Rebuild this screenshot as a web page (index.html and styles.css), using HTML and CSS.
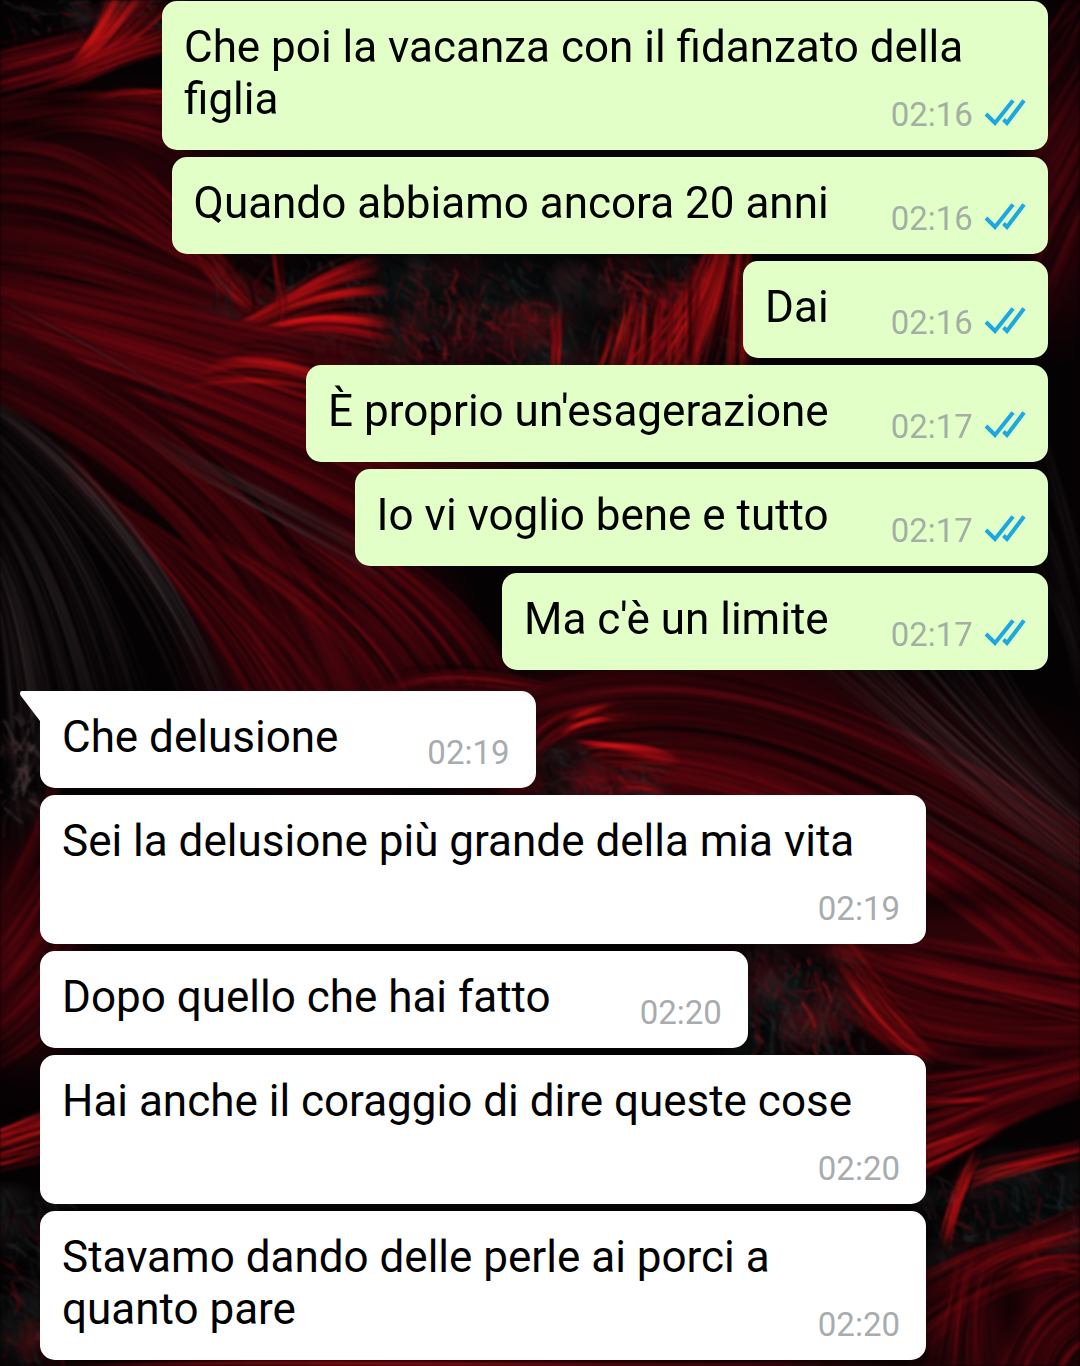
FILE: index.html
```html
<!DOCTYPE html>
<html lang="it">

<head>
    <meta charset="UTF-8">
    <meta name="viewport" content="width=device-width, initial-scale=1">
    <title>Chat</title>
    <link rel="stylesheet" href="styles.css">
</head>

<body>
    <svg class="icon-defs" aria-hidden="true">
        <symbol id="ticks" viewBox="0 0 42 28">
            <path d="M2 16 L11 25 L29 2.500 M19.500 21.500 L23 25 L40 2.500" />
        </symbol>
    </svg>

    <div class="chat-container">
        <canvas class="wallpaper" id="wallpaper" width="1080" height="1366"></canvas>

        <div class="chat-body">
            <!-- Sent messages -->
            <div class="message sent">
                <span class="content">Che poi la vacanza con il fidanzato della figlia</span>
                <span class="timestamp">02:16 <svg class="ticks"><use href="#ticks" /></svg></span>
            </div>
            <div class="message sent">
                <span class="content">Quando abbiamo ancora 20 anni</span>
                <span class="timestamp">02:16 <svg class="ticks"><use href="#ticks" /></svg></span>
            </div>
            <div class="message sent">
                <span class="content">Dai</span>
                <span class="timestamp">02:16 <svg class="ticks"><use href="#ticks" /></svg></span>
            </div>
            <div class="message sent">
                <span class="content">È proprio un'esagerazione</span>
                <span class="timestamp">02:17 <svg class="ticks"><use href="#ticks" /></svg></span>
            </div>
            <div class="message sent">
                <span class="content">Io vi voglio bene e tutto</span>
                <span class="timestamp">02:17 <svg class="ticks"><use href="#ticks" /></svg></span>
            </div>
            <div class="message sent">
                <span class="content">Ma c'è un limite</span>
                <span class="timestamp">02:17 <svg class="ticks"><use href="#ticks" /></svg></span>
            </div>

            <!-- Received messages -->
            <div class="message received first">
                <span class="content">Che delusione</span>
                <span class="timestamp">02:19</span>
            </div>
            <div class="message received">
                <span class="content">Sei la delusione più grande della mia vita</span>
                <span class="timestamp">02:19</span>
            </div>
            <div class="message received">
                <span class="content">Dopo quello che hai fatto</span>
                <span class="timestamp">02:20</span>
            </div>
            <div class="message received">
                <span class="content">Hai anche il coraggio di dire queste cose</span>
                <span class="timestamp">02:20</span>
            </div>
            <div class="message received">
                <span class="content">Stavamo dando delle perle ai porci a quanto pare</span>
                <span class="timestamp">02:20</span>
            </div>
        </div>
    </div>

    <script src="wallpaper.js"></script>
</body>

</html>
```

FILE: styles.css
```css
body {
    font-family: Roboto, "Liberation Sans", sans-serif;
    margin: 0;
    padding: 0;
    background-color: #080203;
}

.icon-defs {
    display: none;
}

.chat-container {
    position: relative;
    min-height: 100vh;
    overflow: hidden;
}

/* sits behind the messages */
.wallpaper {
    position: absolute;
    top: 0;
    left: 0;
    width: 100%;
    height: 100%;
    object-fit: cover;
    filter: blur(1px);
}

.chat-body {
    position: relative;
    display: flex;
    flex-direction: column;
    gap: 7px;
    padding: 1px 32px 6px 40px;
}

.message {
    display: flow-root;
    box-sizing: border-box;
    max-width: 886px;
    padding: 20px 22px 13px 22px;
    border-radius: 15px;
    font-size: 44px;
    line-height: 52px;
    color: #000;
}

.message.sent {
    align-self: flex-end;
    background-color: #e1ffc7;
}

.message.received {
    position: relative;
    align-self: flex-start;
    padding-right: 26px;
    background-color: #fff;
}

.message.first {
    margin-top: 14px;
    border-top-left-radius: 0;
}

/* bubble tail */
.message.first::before {
    content: "";
    position: absolute;
    top: 0;
    right: 100%;
    width: 20px;
    height: 30px;
    background-color: #fff;
    clip-path: path("M20 0 H2 Q0 0 0 2 Q0 4 1 5 L20 30 Z");
}

/* drops to its own row when the last line of text is too long */
.timestamp {
    float: right;
    margin-top: 20px;
    margin-left: 62px;
    font-size: 33px;
    line-height: 44px;
    white-space: nowrap;
    color: #a5aea5;
}

.received .timestamp {
    margin-left: 89px;
    color: #a8acae;
}

.ticks {
    width: 42px;
    height: 28px;
    margin-left: 3px;
    fill: none;
    stroke: #1ba8e2;
    stroke-width: 4;
}
```

FILE: wallpaper.js
```js
// Dark red feather wallpaper, drawn strand by strand
var canvas = document.getElementById("wallpaper");
var ctx = canvas.getContext("2d");

var seed = 11;
function rnd() {
    seed = (seed * 16807) % 2147483647;
    return seed / 2147483647;
}

function glow(x, y, rx, ry, color, alpha) {
    ctx.save();
    ctx.translate(x, y);
    ctx.scale(rx, ry);
    var g = ctx.createRadialGradient(0, 0, 0, 0, 0, 1);
    g.addColorStop(0, "rgba(" + color + "," + (alpha || 1) + ")");
    g.addColorStop(1, "rgba(" + color + ",0)");
    ctx.fillStyle = g;
    ctx.fillRect(-1, -1, 2, 2);
    ctx.restore();
}

// a and b are the two outer bezier curves, the strands run between them
function feather(a, b, count, colors, alpha, width) {
    for (var i = 0; i < count; i++) {
        var t = rnd() * 1.1 - 0.05;
        var p = [];
        for (var k = 0; k < 8; k++) {
            p.push(a[k] + (b[k] - a[k]) * t + (rnd() - 0.5) * 12);
        }
        var c = colors[Math.floor(rnd() * colors.length)];
        var g = ctx.createLinearGradient(p[0], p[1], p[6], p[7]);
        var peak = 0.2 + rnd() * 0.6;
        var o = alpha * (0.2 + rnd() * 0.6);
        g.addColorStop(0, "rgba(" + c + ",0)");
        g.addColorStop(peak, "rgba(" + c + "," + o + ")");
        g.addColorStop(1, "rgba(" + c + ",0)");
        ctx.strokeStyle = g;
        ctx.lineWidth = width * (0.4 + rnd());
        ctx.beginPath();
        ctx.moveTo(p[0], p[1]);
        ctx.bezierCurveTo(p[2], p[3], p[4], p[5], p[6], p[7]);
        ctx.stroke();
    }
}

// short barbs scattered over a dark area, lit in loose patches
function fluff(x, y, w, h, count, colors, angle) {
    for (var n = 0; n < count / 25; n++) {
        var c = colors[Math.floor(rnd() * colors.length)];
        glow(x + rnd() * w, y + rnd() * h, 12 + rnd() * 30, 10 + rnd() * 26, c, 0.35);
    }
    for (var i = 0; i < count; i++) {
        var px = x + rnd() * w;
        var py = y + rnd() * h;
        var d = angle + (rnd() - 0.5) * 1.8;
        var bend = d + (rnd() - 0.5) * 0.7;
        var len = 4 + rnd() * 16;
        var s = colors[Math.floor(rnd() * colors.length)];
        ctx.lineWidth = 1 + rnd() * 3;
        ctx.strokeStyle = "rgba(" + s + "," + (0.1 + rnd() * 0.4) + ")";
        ctx.beginPath();
        ctx.moveTo(px, py);
        ctx.quadraticCurveTo(px + Math.cos(d) * len, py + Math.sin(d) * len,
            px + Math.cos(bend) * len * 1.6, py + Math.sin(bend) * len * 1.6);
        ctx.stroke();
    }
}

var deep = ["60,3,9", "80,4,12", "45,2,8", "0,0,0", "0,0,0", "95,8,15"];
var red = ["115,5,15", "90,4,13", "140,9,18", "60,2,9", "5,0,2", "0,0,0"];
var hot = ["200,14,20", "230,24,22", "150,8,18", "110,4,14", "15,0,2", "0,0,0"];
var gray = ["95,80,82", "65,58,60", "100,78,80", "50,22,28", "0,0,0", "0,0,0"];
var teal = ["18,28,28", "34,42,42", "50,50,54", "80,12,20", "4,12,12", "0,0,0"];
var ember = ["130,12,22", "95,10,20", "60,8,16", "24,30,30", "165,22,26"];

ctx.fillStyle = "#050203";
ctx.fillRect(0, 0, 1080, 1366);

// base tones
glow(110, 200, 230, 130, "48,2,8");
glow(330, 430, 260, 140, "80,3,12");
glow(200, 400, 200, 110, "45,2,8");
glow(330, 650, 160, 160, "70,4,13");
glow(700, 750, 280, 150, "78,3,11");
glow(900, 840, 280, 170, "50,3,8");
glow(1010, 990, 190, 120, "68,4,10");
glow(1060, 180, 60, 190, "55,3,10");
glow(15, 960, 90, 150, "65,4,10");
glow(1020, 1320, 130, 110, "60,4,10");

// top left
fluff(0, 0, 170, 40, 110, teal, 0.4);
feather([-30, 50, 40, 40, 70, 30, 100, 26], [-30, 110, 60, 90, 110, 70, 165, 30], 130, red, 0.8, 3);
feather([70, 60, 95, 40, 100, 10, 110, -20], [80, 80, 120, 50, 150, 20, 200, -10], 50, hot, 0.8, 4);
feather([40, 80, 90, 60, 130, 40, 190, 20], [60, 90, 100, 70, 140, 50, 190, 45], 40, hot, 0.7, 3);
feather([-30, 110, 60, 90, 120, 92, 190, 92], [-40, 160, 60, 110, 130, 130, 200, 170], 130, red, 0.7, 4);
feather([90, 96, 120, 88, 150, 90, 185, 88], [90, 104, 120, 98, 150, 100, 185, 102], 26, hot, 0.9, 3);
feather([-40, 150, 80, 130, 130, 190, 250, 290], [-40, 260, 110, 260, 190, 330, 400, 350], 380, deep, 0.8, 5);
feather([120, 150, 160, 180, 200, 220, 250, 300], [60, 200, 140, 240, 200, 280, 280, 320], 80, red, 0.6, 3);
feather([190, 250, 205, 270, 220, 290, 250, 315], [210, 250, 225, 275, 235, 290, 260, 315], 18, hot, 0.6, 3);
glow(60, 100, 110, 18, "0,0,0", 0.7);
glow(20, 125, 90, 22, "0,0,0", 0.7);

// middle band
glow(500, 310, 250, 80, "8,14,14");
fluff(210, 255, 530, 115, 900, teal, 1.2);
fluff(400, 265, 90, 90, 120, ember, 1);
fluff(480, 300, 60, 40, 60, ember, 1);
fluff(600, 255, 110, 50, 120, ember, 1);
feather([220, 330, 280, 310, 310, 270, 380, 258], [220, 350, 280, 330, 310, 320, 400, 345], 110, hot, 0.8, 5);
feather([272, 330, 282, 300, 275, 280, 272, 240], [282, 330, 290, 300, 285, 280, 280, 245], 18, hot, 0.6, 3);
feather([600, 395, 640, 350, 690, 310, 715, 230], [760, 400, 750, 340, 745, 300, 750, 220], 130, hot, 0.7, 3);
feather([590, 390, 605, 350, 610, 335, 618, 310], [700, 390, 700, 340, 700, 310, 700, 260], 60, hot, 0.8, 4);
feather([550, 380, 548, 350, 552, 335, 554, 310], [562, 380, 560, 350, 562, 335, 560, 310], 18, hot, 0.9, 4);

// left sweep
feather([-60, 260, 120, 300, 230, 330, 420, 360], [-60, 350, 130, 390, 250, 450, 440, 560], 360, red, 0.55, 5);
feather([220, 350, 260, 335, 300, 355, 350, 370], [180, 385, 250, 375, 290, 380, 340, 395], 36, hot, 0.6, 5);
feather([-60, 300, 130, 380, 300, 480, 410, 740], [-60, 380, 130, 440, 250, 570, 300, 750], 280, deep, 0.7, 5);
feather([60, 480, 200, 540, 300, 620, 380, 760], [60, 440, 130, 540, 240, 640, 270, 760], 150, red, 0.55, 2);
feather([340, 520, 440, 580, 490, 630, 530, 720], [200, 530, 300, 590, 370, 650, 400, 730], 150, red, 0.6, 3);
feather([-40, 270, 70, 330, 180, 380, 230, 440], [-30, 290, 70, 345, 170, 390, 220, 450], 7, gray, 0.5, 2);
feather([120, 430, 220, 490, 310, 530, 400, 590], [140, 420, 220, 470, 310, 510, 400, 560], 26, gray, 0.45, 2);
feather([-60, 370, 70, 430, 180, 560, 240, 730], [-60, 390, 60, 480, 150, 590, 190, 730], 60, gray, 0.45, 2);
feather([-40, 400, 60, 500, 110, 590, 150, 740], [-20, 560, 8, 600, 15, 700, 20, 850], 180, gray, 0.32, 2);
feather([370, 690, 430, 655, 500, 670, 580, 690], [370, 710, 430, 680, 500, 690, 580, 710], 60, red, 0.6, 3);

// left edge
fluff(0, 700, 50, 120, 90, gray, 1.5);
feather([0, 900, 20, 860, 40, 830, 60, 760], [-20, 1080, 20, 1060, 40, 1040, 80, 1000], 120, red, 0.5, 4);
glow(10, 1090, 60, 40, "5,0,4", 0.8);
feather([-30, 1145, 15, 1130, 35, 1120, 80, 1105], [-30, 1175, 15, 1168, 35, 1160, 80, 1145], 60, hot, 0.9, 4);
fluff(0, 1185, 60, 181, 170, teal, 0.8);
fluff(0, 1250, 60, 116, 40, ember, 0.8);

// right edge
feather([1030, 60, 1060, 30, 1070, 10, 1090, -20], [1030, 350, 1060, 290, 1080, 240, 1100, 200], 110, deep, 0.7, 3);
feather([1030, 380, 1055, 440, 1070, 520, 1100, 620], [1030, 560, 1050, 600, 1070, 650, 1090, 720], 50, gray, 0.25, 2);

// big plume on the right
feather([480, 780, 600, 640, 760, 660, 1150, 920], [500, 800, 640, 740, 860, 770, 1150, 1080], 450, red, 0.5, 5);
feather([480, 710, 640, 640, 820, 660, 1150, 880], [540, 780, 660, 700, 840, 740, 1150, 980], 260, deep, 0.75, 5);
feather([770, 630, 880, 720, 980, 800, 1130, 920], [970, 620, 1010, 700, 1050, 760, 1130, 820], 130, gray, 0.42, 2);
feather([870, 750, 960, 810, 1020, 840, 1120, 910], [880, 800, 960, 860, 1020, 880, 1120, 950], 30, gray, 0.3, 2);
glow(950, 900, 110, 26, "0,0,0", 0.6);
glow(570, 770, 60, 40, "6,12,12", 0.9);
fluff(535, 745, 110, 55, 150, teal, 0.5);
fluff(560, 770, 60, 25, 30, ember, 0.5);
feather([520, 755, 550, 710, 580, 700, 630, 700], [530, 765, 560, 735, 590, 725, 640, 735], 46, red, 0.9, 3);
feather([560, 718, 575, 708, 590, 706, 615, 704], [565, 730, 580, 722, 595, 718, 615, 716], 14, hot, 0.9, 4);
feather([570, 738, 610, 735, 640, 745, 680, 755], [600, 765, 620, 770, 650, 765, 680, 770], 36, hot, 0.8, 4);
feather([610, 785, 630, 775, 650, 790, 670, 780], [620, 795, 640, 785, 650, 795, 670, 795], 14, hot, 0.6, 4);

// lower right
glow(800, 1000, 80, 70, "6,12,14", 0.9);
fluff(740, 945, 125, 110, 330, teal, 1.2);
fluff(750, 950, 100, 100, 90, ember, 1);
feather([825, 930, 900, 970, 980, 1000, 1130, 980], [835, 1000, 890, 1060, 980, 1070, 1130, 1060], 220, red, 0.6, 5);
feather([830, 930, 870, 960, 880, 1000, 940, 1045], [840, 990, 860, 1020, 880, 1050, 930, 1075], 40, hot, 0.5, 3);
feather([870, 935, 960, 945, 1030, 960, 1130, 980], [870, 965, 960, 990, 1030, 1010, 1130, 1030], 90, red, 0.6, 5);
glow(1000, 1055, 90, 10, "0,0,0", 0.7);
feather([880, 1080, 970, 1080, 1020, 1070, 1130, 1045], [880, 1210, 960, 1150, 1020, 1100, 1130, 1080], 180, red, 0.55, 5);
feather([890, 1094, 930, 1092, 950, 1098, 990, 1092], [890, 1104, 930, 1104, 950, 1104, 990, 1100], 18, hot, 0.8, 4);
feather([900, 1150, 940, 1140, 960, 1135, 1000, 1120], [900, 1180, 940, 1165, 960, 1150, 1000, 1130], 36, hot, 0.7, 4);
glow(1010, 1215, 90, 50, "4,12,12", 0.9);
fluff(925, 1170, 155, 90, 280, teal, 0.9);
feather([950, 1178, 1000, 1150, 1030, 1160, 1110, 1130], [960, 1190, 1020, 1170, 1050, 1160, 1110, 1155], 45, hot, 0.6, 3);
feather([972, 1145, 960, 1180, 950, 1200, 938, 1245], [982, 1155, 968, 1190, 956, 1210, 946, 1250], 20, hot, 0.7, 3);
feather([900, 1290, 980, 1240, 1040, 1240, 1110, 1190], [910, 1366, 970, 1300, 1030, 1270, 1120, 1280], 140, red, 0.6, 3);
feather([950, 1275, 1000, 1240, 1040, 1240, 1100, 1195], [1000, 1295, 1040, 1260, 1060, 1260, 1110, 1290], 40, hot, 0.55, 3);
feather([990, 1400, 1010, 1320, 1050, 1270, 1120, 1270], [1060, 1400, 1060, 1360, 1080, 1340, 1120, 1330], 90, red, 0.6, 3);
feather([920, 1390, 935, 1340, 945, 1300, 960, 1240], [1000, 1400, 990, 1340, 980, 1300, 1000, 1260], 90, red, 0.55, 2);
glow(1010, 1310, 26, 50, "0,0,0", 0.7);
feather([-40, 1366, 200, 1358, 500, 1370, 700, 1360], [300, 1372, 500, 1362, 800, 1370, 1000, 1362], 40, hot, 0.3, 3);
```
